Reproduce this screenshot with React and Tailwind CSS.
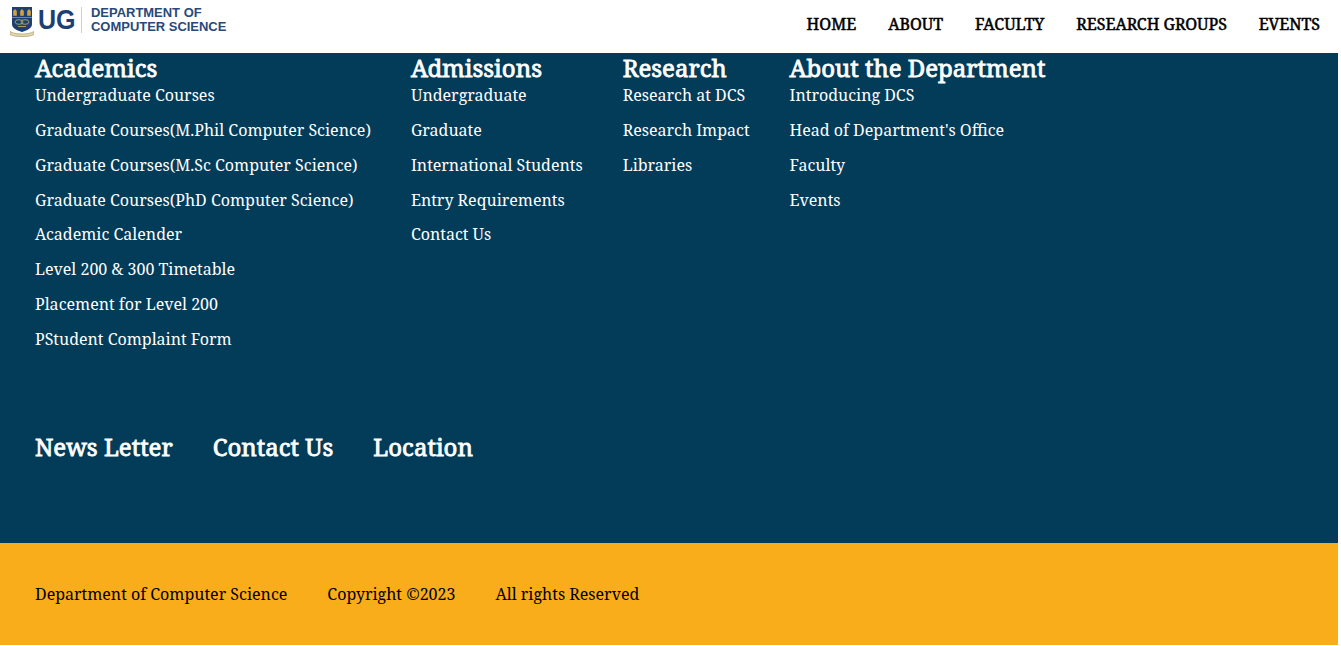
const columns = [
  { title: "Academics", links: ["Undergraduate Courses", "Graduate Courses(M.Phil Computer Science)", "Graduate Courses(M.Sc Computer Science)", "Graduate Courses(PhD Computer Science)", "Academic Calender", "Level 200 & 300 Timetable", "Placement for Level 200", "PStudent Complaint Form"] },
  { title: "Admissions", links: ["Undergraduate", "Graduate", "International Students", "Entry Requirements", "Contact Us"] },
  { title: "Research", links: ["Research at DCS", "Research Impact", "Libraries"] },
  { title: "About the Department", links: ["Introducing DCS", "Head of Department's Office", "Faculty", "Events"] },
];
const nav = ["HOME", "ABOUT", "FACULTY", "RESEARCH GROUPS", "EVENTS"];

function Crest() {
  return (
    <svg width="24" height="30" viewBox="0 0 24 30" className="block shrink-0">
      <path d="M2 0h20v17c0 4-4 6-10 8-6-2-10-4-10-8z" fill="#1d3f72" />
      <path d="M2 10.500h20" stroke="#c9b26a" strokeWidth=".6" />
      <g fill="#d3a23f">
        <path d="M5 2l1.800 2v4.800h-3.600v-4.800z" />
        <path d="M12 2l1.800 2v4.800h-3.600v-4.800z" />
        <path d="M19 2l1.800 2v4.800h-3.600v-4.800z" />
      </g>
      <g fill="none" stroke="#c9b26a" strokeWidth=".8">
        <ellipse cx="9" cy="15" rx="4" ry="2.300" />
        <ellipse cx="15" cy="15" rx="4" ry="2.300" />
        <path d="M8 19.500h8" />
      </g>
      <path d="M0 24.500c3 1.500 6 2.500 12 2.500s9-1 12-2.500v3c-3 1.500-6 2-12 2s-9-.5-12-2z" fill="#e6d9ac" stroke="#8a7a4a" strokeWidth=".5" />
    </svg>
  );
}

function Logo() {
  return (
    <div className="flex items-start font-['Liberation_Sans',sans-serif] font-bold">
      <Crest />
      <div className="ml-[4px] w-[43px] -mt-[2.5px] text-[28.5px] leading-[28px] text-[#1d3f72] origin-left scale-x-[.88]">UG</div>
      <div className="w-px h-[26px] bg-[#dccfae]" />
      <div className="ml-[9px] -mt-[1.500px] text-[13.5px] leading-[14.5px] text-[#28497a] origin-left scale-x-[.96]">
        <div>DEPARTMENT OF</div>
        <div>COMPUTER SCIENCE</div>
      </div>
    </div>
  );
}

export default function App() {
  return (
    <div className="font-['Noto_Serif','DejaVu_Serif',serif] w-[1338px] min-h-[646px] bg-white">
      <header className="h-[53px] bg-white flex justify-between pl-[10px] pr-[18px]">
        <div className="pt-[7px]">
          <Logo />
        </div>
        <nav className="flex gap-8 text-black text-[16px] [-webkit-text-stroke:0.5px_black] leading-[24px] pt-[12px]">
          {nav.map((n) => <a key={n}>{n}</a>)}
        </nav>
      </header>
      <footer>
        <div className="bg-[#023c59] h-[490px] px-[35px] text-white">
          <div className="flex gap-10 h-[367px]">
            {columns.map((c) => (
              <div key={c.title}>
                <h2 className="text-[24px] [-webkit-text-stroke:0.8px_white] leading-[30.2px]">{c.title}</h2>
                <ul>
                  {c.links.map((l) => <li key={l} className="text-[16px] leading-[24px] mb-[10.8px]">{l}</li>)}
                </ul>
              </div>
            ))}
          </div>
          <div className="flex gap-10 text-[24px] [-webkit-text-stroke:0.8px_white] leading-[54px]">
            <span>News Letter</span>
            <span>Contact Us</span>
            <span>Location</span>
          </div>
        </div>
        <div className="bg-[#f9ad1a] h-[102px] px-[35px] flex items-center gap-10 text-[16px] text-black">
          <span>Department of Computer Science</span>
          <span>Copyright ©2023</span>
          <span>All rights Reserved</span>
        </div>
      </footer>
    </div>
  );
}
